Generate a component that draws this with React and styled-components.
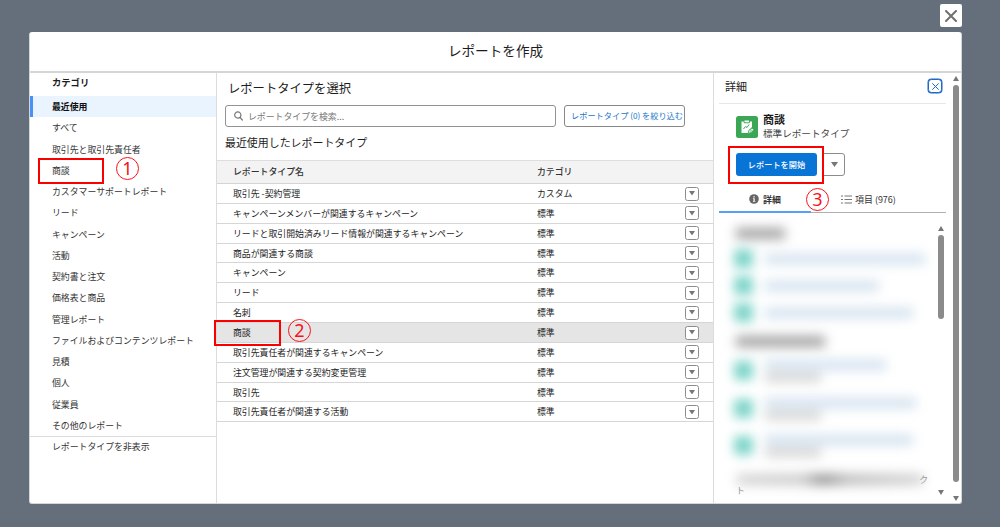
import React from 'react';
import styled, { createGlobalStyle } from 'styled-components';

const Global = createGlobalStyle`
  * { box-sizing: border-box; }
  body {
    margin: 0;
    background: #656f7c;
    color: #1c1c1c;
    font-family: "Noto Sans CJK JP", "Noto Sans", sans-serif;
    font-size: 8.9px;
    overflow: hidden;
  }
  button, input { font-family: inherit; }
`;

const Stage = styled.div`
  position: relative;
  height: 527px;
  padding: 4px 38px 0 29px;
  display: flex;
  flex-direction: column;
`;

const CloseButton = styled.button`
  align-self: flex-end;
  display: flex;
  align-items: center;
  justify-content: center;
  width: 22px;
  height: 23px;
  padding: 0;
  border: 0;
  border-radius: 2px;
  background: #fff;
  margin-bottom: 5px;
`;

const Modal = styled.div`
  display: flex;
  flex-direction: column;
  width: 933px;
  height: 472px;
  background: #fff;
  border-radius: 3px;
  border: 1px solid #d4d6d9;
  border-top: 0;
`;

const Title = styled.h1`
  margin: 0;
  height: 41px;
  flex: none;
  border-bottom: 2px solid #d4d6d6;
  font-size: 13.6px;
  font-weight: 400;
  line-height: 37px;
  text-align: center;
`;

const Columns = styled.div`
  display: flex;
  flex: 1;
  min-height: 0;
`;

const Sidebar = styled.nav`
  width: 187px;
  flex: none;
  border-right: 1px solid #dcdcdc;
`;

const SideHeading = styled.h2`
  margin: 0;
  height: 23px;
  padding-left: 22px;
  font-size: 9.3px;
  line-height: 18px;
`;

const SideItem = styled.div`
  height: ${(p) => (p.$last ? 21 : 21.25)}px;
  padding-left: ${(p) => (p.$active ? 19 : 22)}px;
  border-left: ${(p) => (p.$active ? '3px solid #4a90f5' : '0')};
  border-top: ${(p) => (p.$last ? '1px solid #dcdcdc' : '0')};
  background: ${(p) => (p.$active ? '#eaf4ff' : 'transparent')};
  color: ${(p) => (p.$active ? '#111' : '#333')};
  font-weight: ${(p) => (p.$active ? 700 : 400)};
  line-height: ${(p) => (p.$last ? 20 : 21)}px;
  white-space: nowrap;
`;

const Main = styled.main`
  width: 497px;
  flex: none;
  border-right: 1px solid #dcdcdc;
`;

const MainHeading = styled.h2`
  margin: 0;
  padding: 6px 0 0 11px;
  height: 32px;
  font-size: 12.3px;
  font-weight: 400;
  line-height: 18px;
`;

const SearchRow = styled.div`
  display: flex;
  gap: 8px;
  padding-left: 8px;
`;

const SearchBox = styled.div`
  display: flex;
  align-items: center;
  gap: 5px;
  width: 331px;
  height: 22px;
  padding-left: 8px;
  border: 1px solid #929292;
  border-radius: 3px;
  color: #777;
`;

const FilterButton = styled.button`
  width: 121px;
  height: 22px;
  padding: 0 0 1px 6px;
  border: 1px solid #888;
  border-radius: 3px;
  background: #fff;
  color: #1b77c9;
  font-size: 8.2px;
  line-height: 19px;
  text-align: left;
  white-space: nowrap;
`;

const SubHeading = styled.h3`
  margin: 0;
  height: 33px;
  padding: 6px 0 0 8px;
  font-size: 10.95px;
  font-weight: 400;
  line-height: 18px;
`;

const HeadRow = styled.div`
  display: grid;
  grid-template-columns: 304px 148px 1fr;
  align-items: center;
  height: 24px;
  padding-left: 16px;
  background: #f3f3f3;
  border-top: 1px solid #dedede;
  border-bottom: 1px solid #d4d4d4;
  color: #333;
  font-weight: 500;
  line-height: 20px;
`;

const Row = styled.div`
  display: grid;
  grid-template-columns: 304px 148px 1fr;
  align-items: center;
  height: 19.87px;
  padding-left: 16px;
  border-bottom: 1px solid #d6d6d6;
  background: ${(p) => (p.$active ? '#e5e5e5' : '#fff')};
  line-height: 18px;
  span { padding-top: 1px; }
`;

const MenuButton = styled.button`
  display: flex;
  align-items: center;
  justify-content: center;
  width: ${(p) => (p.$large ? 22 : 14)}px;
  height: ${(p) => (p.$large ? 23 : 14)}px;
  padding: 0;
  border: 1px solid #8c8c8c;
  border-radius: ${(p) => (p.$large ? '0 3px 3px 0' : '2.5px')};
  background: #fff;
`;

const Details = styled.aside`
  position: relative;
  width: 247px;
  flex: none;
  display: flex;
  flex-direction: column;
  padding-left: 5px;
`;

const DetailsHead = styled.div`
  display: flex;
  align-items: center;
  justify-content: space-between;
  width: 227px;
  height: 31px;
  padding: 0 4px 4px 6px;
  border-bottom: 1px solid #e8e8e8;
  font-size: 11px;
  line-height: 16px;
`;

const SmallClose = styled.button`
  display: flex;
  align-items: center;
  justify-content: center;
  width: 14px;
  height: 14px;
  padding: 0;
  border: 1.5px solid #1c68c4;
  border-radius: 3.5px;
  background: #fff;
  box-shadow: 0 0 0 .5px #1c68c4;
`;

const Summary = styled.div`
  display: flex;
  gap: 5px;
  height: 49px;
  padding: 8px 0 0 17px;
`;

const TypeIcon = styled.div`
  width: 22px;
  height: 22px;
  margin-top: 4px;
  border-radius: 2.5px;
  background: #3ba755;
`;

const TypeName = styled.div`
  font-size: 11px;
  font-weight: 700;
  line-height: 14px;
`;

const TypeKind = styled.div`
  color: #444;
  font-size: 9.6px;
  line-height: 14px;
`;

const Actions = styled.div`
  display: flex;
  gap: 6px;
  padding-left: 17px;
  height: 34px;
`;

const StartButton = styled.button`
  width: 81px;
  height: 23px;
  padding: 0 0 1px;
  border: 0;
  border-radius: 3px;
  background: #0874d6;
  color: #fff;
  font-size: 8.2px;
  font-weight: 500;
`;

const Tabs = styled.div`
  display: flex;
  width: 227px;
  height: 26px;
`;

const Tab = styled.div`
  display: flex;
  align-items: center;
  gap: ${(p) => (p.$active ? 4 : 3)}px;
  width: ${(p) => (p.$active ? 92 : 135)}px;
  height: 26px;
  padding: 0 0 0 30px;
  border-bottom: ${(p) => (p.$active ? '2px solid #55a0fa' : '1px solid #b0b0b0')};
  color: #333;
  font-size: 8.95px;
  font-weight: ${(p) => (p.$active ? 700 : 400)};
`;

const BlurBody = styled.div`
  position: relative;
  flex: 1;
  width: 227px;
  padding: 15px 0 0 15px;
`;

const BlurHeading = styled.div`
  width: ${(p) => p.$w}px;
  height: 11px;
  margin: ${(p) => p.$top || 0}px 0 ${(p) => p.$bottom || 0}px 2px;
  background: #a2a2a2;
  filter: blur(6px);
`;

const BlurRow = styled.div`
  display: flex;
  align-items: center;
  gap: 12px;
  height: ${(p) => p.$h}px;
`;

const BlurDot = styled.div`
  width: 19px;
  height: 19px;
  flex: none;
  background: #7fd5ca;
  border-radius: 3px;
  filter: blur(5.5px);
`;

const BlurLines = styled.div`
  display: flex;
  flex-direction: column;
  gap: 4px;
  filter: blur(6px);
`;

const BlurLine = styled.div`
  width: ${(p) => p.$w}px;
  height: ${(p) => (p.$dark ? 7 : 10)}px;
  background: ${(p) => (p.$dark ? '#c8c8c8' : '#d2e1ee')};
`;

const BlurFooter = styled.div`
  width: 186px;
  height: 11px;
  margin: 6px 0 0 3px;
  background: linear-gradient(90deg, #d4d4d4, #cacaca 35%, #8f8f8f 46%, #bcbcbc 60%, #d4d4d4);
  filter: blur(6px);
`;

const TailText = styled.div`
  display: flex;
  justify-content: space-between;
  position: absolute;
  left: 17px;
  top: 257px;
  width: 192px;
  color: #999;
  line-height: 20px;
  span:first-child { padding-top: 11px; }
`;

const Scroll = styled.div`
  position: absolute;
  display: flex;
  flex-direction: column;
  align-items: center;
  width: 6px;
  right: ${(p) => p.$right}px;
  top: ${(p) => p.$top}px;
  bottom: ${(p) => p.$bottom}px;
`;

const Thumb = styled.div`
  width: 6px;
  height: ${(p) => p.$h}px;
  margin: 4px 0 auto;
  border-radius: 3px;
  background: #8b8b8b;
`;

const Mark = styled.div`
  position: absolute;
  left: ${(p) => p.$x}px;
  top: ${(p) => p.$y}px;
  width: ${(p) => p.$w}px;
  height: ${(p) => p.$h}px;
  border: 2px solid #fb0000;
`;

const Step = styled.div`
  position: absolute;
  left: ${(p) => p.$x}px;
  top: ${(p) => p.$y}px;
  width: 23px;
  height: 23px;
  border: 1.3px solid #fb1018;
  border-radius: 50%;
  color: #fb1018;
  font-family: "Noto Sans", sans-serif;
  font-size: 18px;
  line-height: 20px;
  text-align: center;
`;

const Arrow = ({ up, w = 6, h = 5 }) => (
  <svg width={w} height={h} viewBox="0 0 8 6" preserveAspectRatio="none">
    <path d={up ? 'M4 0L8 6H0z' : 'M0 0h8L4 6z'} fill="#777" />
  </svg>
);

const Cross = ({ size, color, stroke }) => (
  <svg width={size} height={size} viewBox="0 0 12 12" fill="none" stroke={color} strokeWidth={stroke} strokeLinecap="round">
    <path d="M1 1l10 10M11 1L1 11" />
  </svg>
);

const categories = [
  '最近使用', 'すべて', '取引先と取引先責任者', '商談', 'カスタマーサポートレポート', 'リード',
  'キャンペーン', '活動', '契約書と注文', '価格表と商品', '管理レポート',
  'ファイルおよびコンテンツレポート', '見積', '個人', '従業員', 'その他のレポート', 'レポートタイプを非表示',
];

const reports = [
  ['取引先 -契約管理', 'カスタム'],
  ['キャンペーンメンバーが関連するキャンペーン', '標準'],
  ['リードと取引開始済みリード情報が関連するキャンペーン', '標準'],
  ['商品が関連する商談', '標準'],
  ['キャンペーン', '標準'],
  ['リード', '標準'],
  ['名刺', '標準'],
  ['商談', '標準'],
  ['取引先責任者が関連するキャンペーン', '標準'],
  ['注文管理が関連する契約変更管理', '標準'],
  ['取引先', '標準'],
  ['取引先責任者が関連する活動', '標準'],
];

export default function App() {
  return (
    <Stage>
      <Global />
      <CloseButton aria-label="閉じる"><Cross size={12} color="#707070" stroke={2} /></CloseButton>
      <Modal>
        <Title>レポートを作成</Title>
        <Columns>
          <Sidebar>
            <SideHeading>カテゴリ</SideHeading>
            {categories.map((c, i) => (
              <SideItem key={c} $active={i === 0} $last={i === categories.length - 1}>{c}</SideItem>
            ))}
          </Sidebar>
          <Main>
            <MainHeading>レポートタイプを選択</MainHeading>
            <SearchRow>
              <SearchBox>
                <svg width="9" height="10" viewBox="0 0 9 10" fill="none" stroke="#777" strokeWidth="1.2" strokeLinecap="round">
                  <circle cx="3.8" cy="4" r="3.1" />
                  <path d="M6 6.4l2.3 2.6" />
                </svg>
                レポートタイプを検索...
              </SearchBox>
              <FilterButton>レポートタイプ (0) を絞り込む</FilterButton>
            </SearchRow>
            <SubHeading>最近使用したレポートタイプ</SubHeading>
            <HeadRow><span>レポートタイプ名</span><span>カテゴリ</span></HeadRow>
            {reports.map(([name, kind]) => (
              <Row key={name} $active={name === '商談'}>
                <span>{name}</span>
                <span>{kind}</span>
                <MenuButton aria-label="メニュー"><Arrow w={6} h={4.5} /></MenuButton>
              </Row>
            ))}
          </Main>
          <Details>
            <DetailsHead>
              詳細
              <SmallClose aria-label="閉じる"><Cross size={7} color="#1c68c4" stroke={1.7} /></SmallClose>
            </DetailsHead>
            <Summary>
              <TypeIcon>
                <svg width="22" height="22" viewBox="0 0 22 22" fill="none">
                  <path d="M5.500 5.500h2l.5 1.800h5.500l.5-1.800h2V11l-3.500 3.500V17h-7z" fill="#fff" />
                  <path d="M8.500 4.500h4.500v1.800H8.500z" fill="#fff" />
                  <path d="M7.500 13l2-2.500 1.500 1 2-3" stroke="#3ba755" strokeWidth="1" />
                  <path d="M12 17.500l.8-2.800 3.200-2.700 1.800 1.700-3 3z" fill="#fff" stroke="#3ba755" strokeWidth=".8" />
                  <path d="M13.500 16l2.500-2.300" stroke="#3ba755" strokeWidth=".7" />
                </svg>
              </TypeIcon>
              <div>
                <TypeName>商談</TypeName>
                <TypeKind>標準レポートタイプ</TypeKind>
              </div>
            </Summary>
            <Actions>
              <StartButton>レポートを開始</StartButton>
              <MenuButton $large aria-label="メニュー"><Arrow w={7} h={5} /></MenuButton>
            </Actions>
            <Tabs>
              <Tab $active>
                <svg width="10" height="10" viewBox="0 0 10 10">
                  <circle cx="5" cy="5" r="4.800" fill="#666" />
                  <path d="M4.400 2.200h1.300v1.200H4.400zM4 4.300h1.700v2.700h.6v.8H3.900V7h.6V5.100H4z" fill="#fff" />
                </svg>
                詳細
              </Tab>
              <Tab>
                <svg width="11" height="9" viewBox="0 0 11 9" stroke="#777" strokeWidth="1.200">
                  <path d="M0 1h2M0 4.500h2M0 8h2M3.500 1H11M3.500 4.500H11M3.500 8H11" />
                </svg>
                項目 (976)
              </Tab>
            </Tabs>
            <BlurBody>
              <BlurHeading $w={49} $bottom={6} />
              <BlurRow $h={27}><BlurDot /><BlurLines><BlurLine $w={160} /></BlurLines></BlurRow>
              <BlurRow $h={27}><BlurDot /><BlurLines><BlurLine $w={114} /></BlurLines></BlurRow>
              <BlurRow $h={27}><BlurDot /><BlurLines><BlurLine $w={148} /></BlurLines></BlurRow>
              <BlurHeading $w={89} $top={10} />
              <BlurRow $h={47}><BlurDot /><BlurLines><BlurLine $w={121} /><BlurLine $w={56} $dark /></BlurLines></BlurRow>
              <BlurRow $h={28}><BlurDot /><BlurLines><BlurLine $w={151} /><BlurLine $w={56} $dark /></BlurLines></BlurRow>
              <BlurRow $h={46}><BlurDot /><BlurLines><BlurLine $w={148} /><BlurLine $w={56} $dark /></BlurLines></BlurRow>
              <BlurFooter />
              <TailText><span>ト</span><span>ク</span></TailText>
            </BlurBody>
            <Scroll $right={17} $top={153} $bottom={8}>
              <Arrow up />
              <Thumb $h={84} />
              <Arrow />
            </Scroll>
            <Scroll $right={2} $top={3} $bottom={2}>
              <Arrow up />
              <Thumb $h={397} />
              <Arrow />
            </Scroll>
          </Details>
        </Columns>
      </Modal>
      <Mark $x={38} $y={158} $w={66} $h={26} />
      <Mark $x={214} $y={320} $w={67} $h={26} />
      <Mark $x={728} $y={146} $w={96} $h={38} />
      <Step $x={116} $y={157}>1</Step>
      <Step $x={288} $y={319}>2</Step>
      <Step $x={806} $y={188}>3</Step>
    </Stage>
  );
}
